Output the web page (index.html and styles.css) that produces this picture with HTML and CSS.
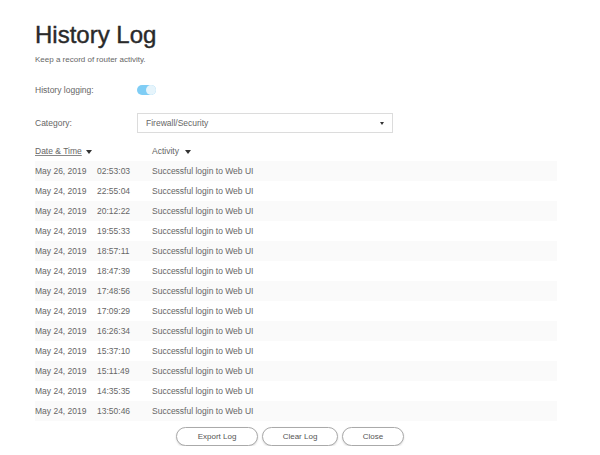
FILE: index.html
```html
<!DOCTYPE html>
<html lang="en">
<head>
    <meta charset="UTF-8">
    <title>History Log</title>
    <link rel="stylesheet" href="styles.css">
</head>
<body>
    <div class="panel">
        <h1>History Log</h1>
        <p class="intro">Keep a record of router activity.</p>

        <div class="field">
            <span class="label">History logging:</span>
            <span class="toggle"><span class="knob"></span></span>
        </div>

        <div class="field category">
            <span class="label">Category:</span>
            <div class="select">
                <span>Firewall/Security</span>
                <span class="caret"></span>
            </div>
        </div>

        <div class="log-head">
            <span class="col-date"><u>Date &amp; Time</u> <span class="caret"></span></span>
            <span class="col-act">Activity <span class="caret"></span></span>
        </div>

        <div class="log" id="log"></div>

        <div class="actions">
            <button class="btn">Export Log</button>
            <button class="btn">Clear Log</button>
            <button class="btn">Close</button>
        </div>
    </div>

    <script>
        var entries = [
            ["May 26, 2019", "02:53:03"],
            ["May 24, 2019", "22:55:04"],
            ["May 24, 2019", "20:12:22"],
            ["May 24, 2019", "19:55:33"],
            ["May 24, 2019", "18:57:11"],
            ["May 24, 2019", "18:47:39"],
            ["May 24, 2019", "17:48:56"],
            ["May 24, 2019", "17:09:29"],
            ["May 24, 2019", "16:26:34"],
            ["May 24, 2019", "15:37:10"],
            ["May 24, 2019", "15:11:49"],
            ["May 24, 2019", "14:35:35"],
            ["May 24, 2019", "13:50:46"]
        ];
        var log = document.getElementById("log");
        entries.forEach(function (e) {
            var row = document.createElement("div");
            row.className = "row";
            row.innerHTML = '<span class="d">' + e[0] + '</span>' +
                '<span class="t">' + e[1] + '</span>' +
                '<span class="a">Successful login to Web UI</span>';
            log.appendChild(row);
        });
    </script>
</body>
</html>
```

FILE: styles.css
```css
body {
    margin: 0;
    background: #fff;
    font-family: "Liberation Sans", Arial, sans-serif;
    color: #666;
}
.panel {
    padding: 21px 0 0 35px;
    width: 522px;
}
h1 {
    margin: 0;
    font-size: 24px;
    font-weight: normal;
    color: #2a2a2a;
    -webkit-text-stroke: 0.4px #2a2a2a;
    line-height: 28px;
}
.intro {
    margin: 5px 0 0;
    font-size: 8px;
    line-height: 12px;
}
.field {
    display: flex;
    align-items: center;
    font-size: 8.5px;
    margin-top: 18px;
    height: 12px;
}
.label {
    width: 102px;
}
.toggle {
    position: relative;
    width: 19px;
    height: 10px;
    border-radius: 5px;
    background: #7fcdf5;
}
.knob {
    position: absolute;
    right: 0;
    top: 0;
    width: 10px;
    height: 10px;
    border-radius: 50%;
    background: #e6f4fb;
}
.category {
    margin-top: 17px;
    height: 20px;
}
.select {
    display: flex;
    justify-content: space-between;
    align-items: center;
    box-sizing: border-box;
    width: 256px;
    height: 20px;
    border: 1px solid #dcdcdc;
    padding: 0 8px;
    color: #666;
}
.caret {
    display: inline-block;
    width: 0;
    height: 0;
    border-left: 3.5px solid transparent;
    border-right: 3.5px solid transparent;
    border-top: 4px solid #333;
    vertical-align: middle;
}
.select .caret {
    border-left-width: 2.5px;
    border-right-width: 2.5px;
    border-top-width: 3px;
}
.log-head {
    display: flex;
    font-size: 8.5px;
    margin-top: 11px;
    height: 14px;
    align-items: center;
}
.col-date {
    width: 117px;
}
.col-date u {
    text-decoration-color: #888;
    margin-right: 2px;
}
.col-act .caret {
    margin-left: 4px;
}
.log {
    margin-top: 3px;
    width: 522px;
}
.row {
    display: flex;
    align-items: center;
    height: 20px;
    font-size: 8.5px;
}
.row:nth-child(odd) {
    background: #fafafa;
}
.row .d {
    width: 62px;
}
.row .t {
    width: 55px;
}
.actions {
    display: flex;
    gap: 4px;
    margin-top: 6px;
    padding-left: 141px;
}
.btn {
    font-family: inherit;
    font-size: 8px;
    color: #555;
    background: #fff;
    border: 1px solid #aaa;
    border-radius: 10px;
    height: 19px;
    padding: 0;
    box-shadow: 0 1px 2px rgba(0, 0, 0, 0.15);
}
.btn:nth-child(1) { width: 82px; }
.btn:nth-child(2) { width: 76px; }
.btn:nth-child(3) { width: 62px; }
```
